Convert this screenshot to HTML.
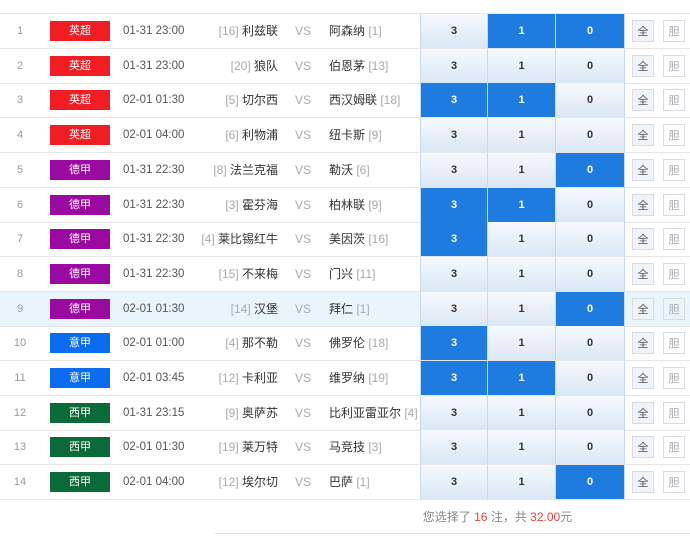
<!DOCTYPE html><html><head><meta charset="utf-8"><style>
body{margin:0;width:690px;height:536px;background:#fff;font-family:"Liberation Sans","Noto Sans CJK SC",sans-serif;position:relative;overflow:hidden}
.r{position:absolute;left:0;width:690px;height:34px;border-bottom:1px solid #e6e6e6;font-size:12px;color:#333}
.r>div{position:absolute;top:0;line-height:34px}
.n{left:0;width:40px;text-align:center;color:#999;font-size:11px}
.b{left:50px;width:60px;height:20px;top:7px!important;line-height:20px!important;text-align:center;color:#fff;font-size:11px}
.t{left:123px;color:#555;font-size:11.5px}
.h{right:412px;text-align:right}
.v{left:295px;color:#aaa}
.a{left:329px}
.g{color:#aaa}
.o{width:68px;height:34px;text-align:center;font-weight:bold;font-size:11px;background:linear-gradient(#f6f9fd,#dae7f5);border-right:1px solid #c9d9ec;box-sizing:border-box}
.o.s{background:#1e7be0;color:#fff}
.o1{left:420px;border-left:1px solid #c9d9ec}.o2{left:488px}.o3{left:556px;width:69px}
.q,.d{width:22px;height:22px;top:6px!important;line-height:22px!important;text-align:center;font-size:11px;border:1px solid #d8dde3;box-sizing:border-box}
.q{left:632px;background:#eef4fa;color:#555}.d{left:663px;color:#aaa}
.E{background:#f01e23}.D{background:#9a0aa0}.I{background:#0a6cf0}.X{background:#0b6b38}
</style></head><body>
<div style="position:absolute;left:0;top:13px;width:690px;border-top:1px solid #e6e6e6"></div>

<div class="r" style="top:14px"><div class="n">1</div><div class="b E">英超</div><div class="t">01-31 23:00</div><div class="h"><span class="g">[16]</span> 利兹联</div><div class="v">VS</div><div class="a">阿森纳 <span class="g">[1]</span></div><div class="o o1">3</div><div class="o o2 s">1</div><div class="o o3 s">0</div><div class="q">全</div><div class="d">胆</div></div>
<div class="r" style="top:48.7px"><div class="n">2</div><div class="b E">英超</div><div class="t">01-31 23:00</div><div class="h"><span class="g">[20]</span> 狼队</div><div class="v">VS</div><div class="a">伯恩茅 <span class="g">[13]</span></div><div class="o o1">3</div><div class="o o2">1</div><div class="o o3">0</div><div class="q">全</div><div class="d">胆</div></div>
<div class="r" style="top:83.4px"><div class="n">3</div><div class="b E">英超</div><div class="t">02-01 01:30</div><div class="h"><span class="g">[5]</span> 切尔西</div><div class="v">VS</div><div class="a">西汉姆联 <span class="g">[18]</span></div><div class="o o1 s">3</div><div class="o o2 s">1</div><div class="o o3">0</div><div class="q">全</div><div class="d">胆</div></div>
<div class="r" style="top:118.1px"><div class="n">4</div><div class="b E">英超</div><div class="t">02-01 04:00</div><div class="h"><span class="g">[6]</span> 利物浦</div><div class="v">VS</div><div class="a">纽卡斯 <span class="g">[9]</span></div><div class="o o1">3</div><div class="o o2">1</div><div class="o o3">0</div><div class="q">全</div><div class="d">胆</div></div>
<div class="r" style="top:152.8px"><div class="n">5</div><div class="b D">德甲</div><div class="t">01-31 22:30</div><div class="h"><span class="g">[8]</span> 法兰克福</div><div class="v">VS</div><div class="a">勒沃 <span class="g">[6]</span></div><div class="o o1">3</div><div class="o o2">1</div><div class="o o3 s">0</div><div class="q">全</div><div class="d">胆</div></div>
<div class="r" style="top:187.5px"><div class="n">6</div><div class="b D">德甲</div><div class="t">01-31 22:30</div><div class="h"><span class="g">[3]</span> 霍芬海</div><div class="v">VS</div><div class="a">柏林联 <span class="g">[9]</span></div><div class="o o1 s">3</div><div class="o o2 s">1</div><div class="o o3">0</div><div class="q">全</div><div class="d">胆</div></div>
<div class="r" style="top:222.2px"><div class="n">7</div><div class="b D">德甲</div><div class="t">01-31 22:30</div><div class="h"><span class="g">[4]</span> 莱比锡红牛</div><div class="v">VS</div><div class="a">美因茨 <span class="g">[16]</span></div><div class="o o1 s">3</div><div class="o o2">1</div><div class="o o3">0</div><div class="q">全</div><div class="d">胆</div></div>
<div class="r" style="top:256.9px"><div class="n">8</div><div class="b D">德甲</div><div class="t">01-31 22:30</div><div class="h"><span class="g">[15]</span> 不来梅</div><div class="v">VS</div><div class="a">门兴 <span class="g">[11]</span></div><div class="o o1">3</div><div class="o o2">1</div><div class="o o3">0</div><div class="q">全</div><div class="d">胆</div></div>
<div class="r" style="top:291.6px;background:#eaf4fd"><div class="n">9</div><div class="b D">德甲</div><div class="t">02-01 01:30</div><div class="h"><span class="g">[14]</span> 汉堡</div><div class="v">VS</div><div class="a">拜仁 <span class="g">[1]</span></div><div class="o o1">3</div><div class="o o2">1</div><div class="o o3 s">0</div><div class="q">全</div><div class="d">胆</div></div>
<div class="r" style="top:326.3px"><div class="n">10</div><div class="b I">意甲</div><div class="t">02-01 01:00</div><div class="h"><span class="g">[4]</span> 那不勒</div><div class="v">VS</div><div class="a">佛罗伦 <span class="g">[18]</span></div><div class="o o1 s">3</div><div class="o o2">1</div><div class="o o3">0</div><div class="q">全</div><div class="d">胆</div></div>
<div class="r" style="top:361px"><div class="n">11</div><div class="b I">意甲</div><div class="t">02-01 03:45</div><div class="h"><span class="g">[12]</span> 卡利亚</div><div class="v">VS</div><div class="a">维罗纳 <span class="g">[19]</span></div><div class="o o1 s">3</div><div class="o o2 s">1</div><div class="o o3">0</div><div class="q">全</div><div class="d">胆</div></div>
<div class="r" style="top:395.7px"><div class="n">12</div><div class="b X">西甲</div><div class="t">01-31 23:15</div><div class="h"><span class="g">[9]</span> 奥萨苏</div><div class="v">VS</div><div class="a">比利亚雷亚尔 <span class="g">[4]</span></div><div class="o o1">3</div><div class="o o2">1</div><div class="o o3">0</div><div class="q">全</div><div class="d">胆</div></div>
<div class="r" style="top:430.4px"><div class="n">13</div><div class="b X">西甲</div><div class="t">02-01 01:30</div><div class="h"><span class="g">[19]</span> 莱万特</div><div class="v">VS</div><div class="a">马竞技 <span class="g">[3]</span></div><div class="o o1">3</div><div class="o o2">1</div><div class="o o3">0</div><div class="q">全</div><div class="d">胆</div></div>
<div class="r" style="top:465.1px"><div class="n">14</div><div class="b X">西甲</div><div class="t">02-01 04:00</div><div class="h"><span class="g">[12]</span> 埃尔切</div><div class="v">VS</div><div class="a">巴萨 <span class="g">[1]</span></div><div class="o o1">3</div><div class="o o2">1</div><div class="o o3 s">0</div><div class="q">全</div><div class="d">胆</div></div>

<div style="position:absolute;left:300px;width:395px;top:508px;text-align:center;font-size:12px;color:#888">您选择了 <span style="color:#e84040">16</span> 注，共 <span style="color:#e84040">32.00</span>元</div>
<div style="position:absolute;left:215px;top:533px;width:475px;border-top:1px solid #e0e0e0"></div>
</body></html>
